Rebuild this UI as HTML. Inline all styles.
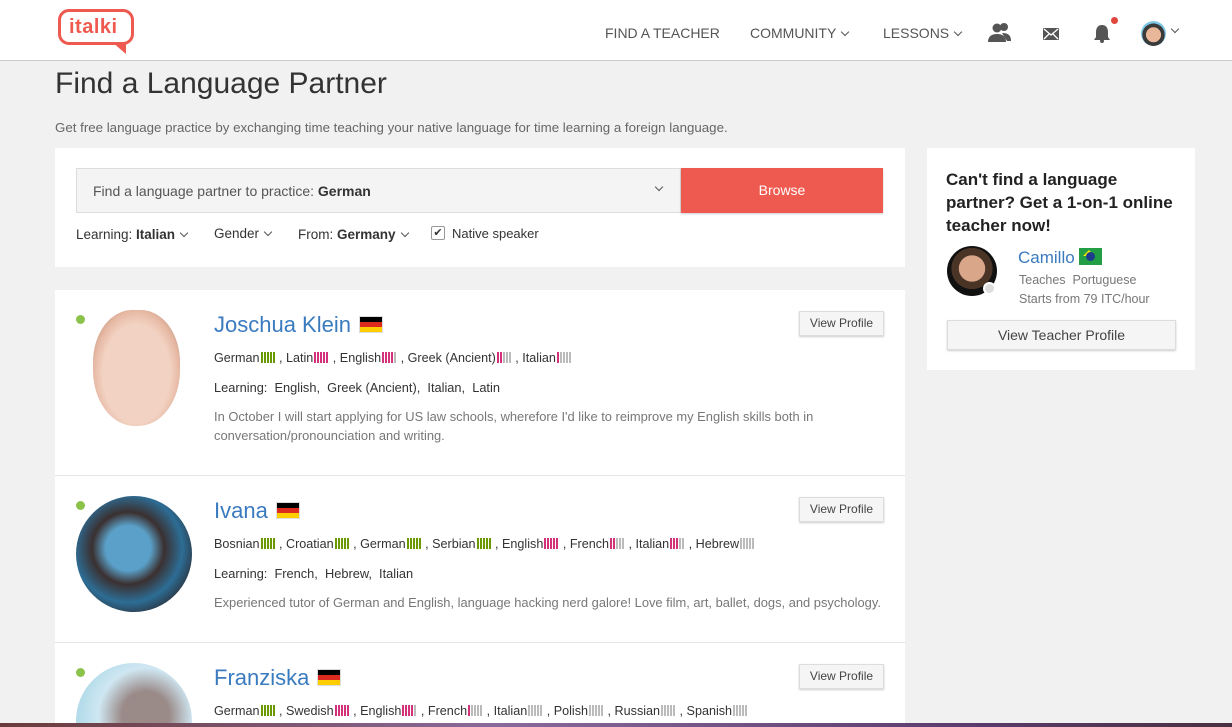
<!DOCTYPE html>
<html><head><meta charset="utf-8"><style>
*{box-sizing:border-box;margin:0;padding:0}
html,body{width:1232px;height:727px;overflow:hidden}
body{background:#f1f1f1;font-family:"Liberation Sans",sans-serif;color:#333;position:relative}
.a{position:absolute}
.hdr{left:0;top:0;width:1232px;height:61px;background:#fff;border-bottom:1px solid #ccc}
.nav{font-size:14px;color:#555;top:25px}
.card{background:#fff}
.b{display:inline-block;vertical-align:-1px;margin-left:1px;height:11px}
.b i{display:inline-block;width:2px;height:11px;margin-right:1px;background:#bbb}
.g i{background:#6b9a00}
.p{background:#d4317b!important}
.langs{font-size:12.6px;color:#333}
.name{font-size:22px;color:#3a7bc0}
.flag{display:inline-block;width:24px;height:17px;vertical-align:-1px;margin-left:8px;border:1px solid #ddd;background:linear-gradient(#000 0 33%,#dd2a1f 33% 66%,#ffce00 66%)}
.vp{width:85px;height:25px;background:#f5f5f5;border:1px solid #ddd;box-shadow:0 1px 2px rgba(0,0,0,.2);font-size:12px;color:#444;text-align:center;line-height:23px}
.dot{width:9px;height:9px;border-radius:50%;background:#8bc34a}
.desc{font-size:12.9px;color:#777;line-height:19px}
.chev{display:inline-block;width:6px;height:6px;border-right:1.3px solid #555;border-bottom:1.3px solid #555;transform:rotate(45deg);margin-left:6px;vertical-align:3px}
</style></head><body>
<div class="a hdr"></div>
<div class="a" style="left:58px;top:9px;width:76px;height:36px;border:3.5px solid #ee5a4f;border-radius:11px"></div>
<div class="a" style="left:112px;top:42px;width:0;height:0;border-left:14px solid transparent;border-top:12px solid #ee5a4f"></div>
<div class="a" style="left:69px;top:16px;font-size:20px;font-weight:bold;color:#ee5a4f;letter-spacing:.5px">italki</div>
<div class="a nav" style="left:605px">FIND A TEACHER</div>
<div class="a nav" style="left:750px">COMMUNITY<span class="chev"></span></div>
<div class="a nav" style="left:883px">LESSONS<span class="chev"></span></div>
<svg class="a" style="left:988px;top:22px" width="24" height="22" viewBox="0 0 24 22"><circle cx="9" cy="6" r="4.5" fill="#555"/><path d="M0 20c0-6 4-8 9-8s9 2 9 8z" fill="#555"/><circle cx="16" cy="5" r="4" fill="#555"/><path d="M14 11c6 0 9 2 9 8h-4z" fill="#555"/></svg>
<svg class="a" style="left:1043px;top:28px" width="16" height="12"><rect width="16" height="12" rx="1" fill="#555"/><path d="M1 1l7 6 7-6M1 11l5-5M15 11l-5-5" stroke="#fff" stroke-width="1.3" fill="none"/></svg>
<svg class="a" style="left:1093px;top:24px" width="18" height="19"><path d="M9 1c-4 0-6 3-6 7v5l-2 3h16l-2-3V8c0-4-2-7-6-7z" fill="#555"/><circle cx="9" cy="17" r="2" fill="#555"/></svg>
<div class="a" style="left:1111px;top:17px;width:7px;height:7px;border-radius:50%;background:#e0463b"></div>
<div class="a" style="left:1141px;top:21px;width:25px;height:25px;border-radius:50%;background:radial-gradient(circle at 50% 55%,#e8b79a 0 40%,#3a3a3a 41% 60%,#7fc8e6 61%)"></div>
<span class="a chev" style="left:1166px;top:26px"></span>

<div class="a" style="left:55px;top:67px;font-size:30px;color:#333">Find a Language Partner</div>
<div class="a" style="left:55px;top:120px;font-size:13.3px;color:#666">Get free language practice by exchanging time teaching your native language for time learning a foreign language.</div>

<div class="a card" style="left:55px;top:148px;width:850px;height:119px"></div>
<div class="a" style="left:76px;top:168px;width:605px;height:45px;background:#f4f4f4;border:1px solid #ddd"></div>
<div class="a" style="left:93px;top:183px;font-size:14px;color:#555">Find a language partner to practice: <b style="color:#333">German</b></div>
<span class="a chev" style="left:650px;top:184px"></span>
<div class="a" style="left:681px;top:168px;width:202px;height:45px;background:#ee5a4f;color:#fff;font-size:14px;text-align:center;line-height:44px;box-shadow:0 1px 2px rgba(0,0,0,.2)">Browse</div>
<div class="a" style="left:76px;top:227px;font-size:13.5px;color:#333">Learning: <b>Italian</b><span class="chev"></span></div>
<div class="a" style="left:214px;top:226px;font-size:13.5px;color:#333">Gender<span class="chev"></span></div>
<div class="a" style="left:298px;top:227px;font-size:13.5px;color:#333">From: <b>Germany</b><span class="chev"></span></div>
<div class="a" style="left:431px;top:226px;width:14px;height:14px;border:1px solid #999;border-radius:2px;font-size:11px;text-align:center;line-height:12px">✔</div>
<div class="a" style="left:452px;top:226px;font-size:13px;color:#333">Native speaker</div>

<div class="a card" style="left:927px;top:148px;width:268px;height:222px"></div>
<div class="a" style="left:946px;top:168px;width:240px;font-size:17px;font-weight:bold;line-height:23px;color:#222">Can't find a language partner? Get a 1-on-1 online teacher now!</div>
<div class="a" style="left:947px;top:246px;width:50px;height:50px;border-radius:50%;background:radial-gradient(circle at 50% 45%,#d9a68a 0 35%,#4a3426 36% 55%,#111 56%)"></div>
<div class="a" style="left:983px;top:282px;width:13px;height:13px;border-radius:50%;background:#ddd;border:2px solid #fff"></div>
<div class="a" style="left:1018px;top:248px;font-size:17px;color:#3a7bc0">Camillo <span style="display:inline-block;width:23px;height:17px;background:#229e45;vertical-align:-2px;position:relative"><span style="position:absolute;left:4px;top:2px;width:0;height:0;border:6.5px solid transparent;border-bottom-color:#f8e509;border-top:0;"></span><span style="position:absolute;left:7px;top:4px;width:9px;height:9px;border-radius:50%;background:#1e3c8c"></span></span></div>
<div class="a" style="left:1019px;top:273px;font-size:12.5px;color:#777">Teaches&nbsp; Portuguese</div>
<div class="a" style="left:1019px;top:292px;font-size:12.5px;color:#777">Starts from 79 ITC/hour</div>
<div class="a vp" style="left:947px;top:320px;width:229px;height:30px;line-height:28px;font-size:14px">View Teacher Profile</div>

<div class="a card" style="left:55px;top:290px;width:850px;height:437px;overflow:hidden">
<div class="a" style="left:21px;top:373px;width:116px;height:116px;border-radius:50%;background:radial-gradient(circle at 60% 45%,#9a8a88 0 25%,#cfe7f2 50%,#b4dcea 70%)"></div>
</div>
<div class="a" style="left:55px;top:475px;width:850px;height:1px;background:#e5e5e5"></div>
<div class="a" style="left:55px;top:642px;width:850px;height:1px;background:#e5e5e5"></div>

<div class="a dot" style="left:76px;top:315px"></div>
<div class="a" style="left:93px;top:310px;width:87px;height:116px;border-radius:45% 45% 48% 48%;background:radial-gradient(ellipse at 50% 55%,#f2d2c2 0 55%,#e6b8a3 70%,#a8846a 90%)"></div>
<div class="a name" style="left:214px;top:312px">Joschua Klein<span class="flag"></span></div>
<div class="a langs" style="left:214px;top:351px">German<span class="b g"><i></i><i></i><i></i><i></i><i></i></span> , Latin<span class="b"><i class="p"></i><i class="p"></i><i class="p"></i><i class="p"></i><i class="p"></i></span> , English<span class="b"><i class="p"></i><i class="p"></i><i class="p"></i><i class="p"></i><i></i></span> , Greek (Ancient)<span class="b"><i class="p"></i><i class="p"></i><i></i><i></i><i></i></span> , Italian<span class="b"><i class="p"></i><i></i><i></i><i></i><i></i></span></div>
<div class="a langs" style="left:214px;top:380px;font-size:12.8px">Learning:&nbsp; English,&nbsp; Greek (Ancient),&nbsp; Italian,&nbsp; Latin</div>
<div class="a desc" style="left:214px;top:407px;width:640px">In October I will start applying for US law schools, wherefore I'd like to reimprove my English skills both in conversation/pronounciation and writing.</div>
<div class="a vp" style="left:799px;top:311px">View Profile</div>

<div class="a dot" style="left:76px;top:501px"></div>
<div class="a" style="left:76px;top:496px;width:116px;height:116px;border-radius:50%;background:radial-gradient(circle at 45% 45%,#5aa0c8 0 25%,#3b3030 40%,#2d6d95 60%,#2a2a30 80%)"></div>
<div class="a name" style="left:214px;top:498px">Ivana<span class="flag"></span></div>
<div class="a langs" style="left:214px;top:537px">Bosnian<span class="b g"><i></i><i></i><i></i><i></i><i></i></span> , Croatian<span class="b g"><i></i><i></i><i></i><i></i><i></i></span> , German<span class="b g"><i></i><i></i><i></i><i></i><i></i></span> , Serbian<span class="b g"><i></i><i></i><i></i><i></i><i></i></span> , English<span class="b"><i class="p"></i><i class="p"></i><i class="p"></i><i class="p"></i><i class="p"></i></span> , French<span class="b"><i class="p"></i><i class="p"></i><i></i><i></i><i></i></span> , Italian<span class="b"><i class="p"></i><i class="p"></i><i class="p"></i><i></i><i></i></span> , Hebrew<span class="b"><i></i><i></i><i></i><i></i><i></i></span></div>
<div class="a langs" style="left:214px;top:566px;font-size:12.8px">Learning:&nbsp; French,&nbsp; Hebrew,&nbsp; Italian</div>
<div class="a desc" style="left:214px;top:593px">Experienced tutor of German and English, language hacking nerd galore! Love film, art, ballet, dogs, and psychology.</div>
<div class="a vp" style="left:799px;top:497px">View Profile</div>

<div class="a dot" style="left:76px;top:668px"></div>
<div class="a name" style="left:214px;top:665px">Franziska<span class="flag"></span></div>
<div class="a langs" style="left:214px;top:704px">German<span class="b g"><i></i><i></i><i></i><i></i><i></i></span> , Swedish<span class="b"><i class="p"></i><i class="p"></i><i class="p"></i><i class="p"></i><i class="p"></i></span> , English<span class="b"><i class="p"></i><i class="p"></i><i class="p"></i><i class="p"></i><i></i></span> , French<span class="b"><i class="p"></i><i></i><i></i><i></i><i></i></span> , Italian<span class="b"><i></i><i></i><i></i><i></i><i></i></span> , Polish<span class="b"><i></i><i></i><i></i><i></i><i></i></span> , Russian<span class="b"><i></i><i></i><i></i><i></i><i></i></span> , Spanish<span class="b"><i></i><i></i><i></i><i></i><i></i></span></div>
<div class="a vp" style="left:799px;top:664px">View Profile</div>

<div class="a" style="left:0;top:723px;width:1232px;height:4px;background:linear-gradient(90deg,#6b3a3a,#8a6a9a 40%,#5a3a6a 80%,#4a3040)"></div>
</body></html>
